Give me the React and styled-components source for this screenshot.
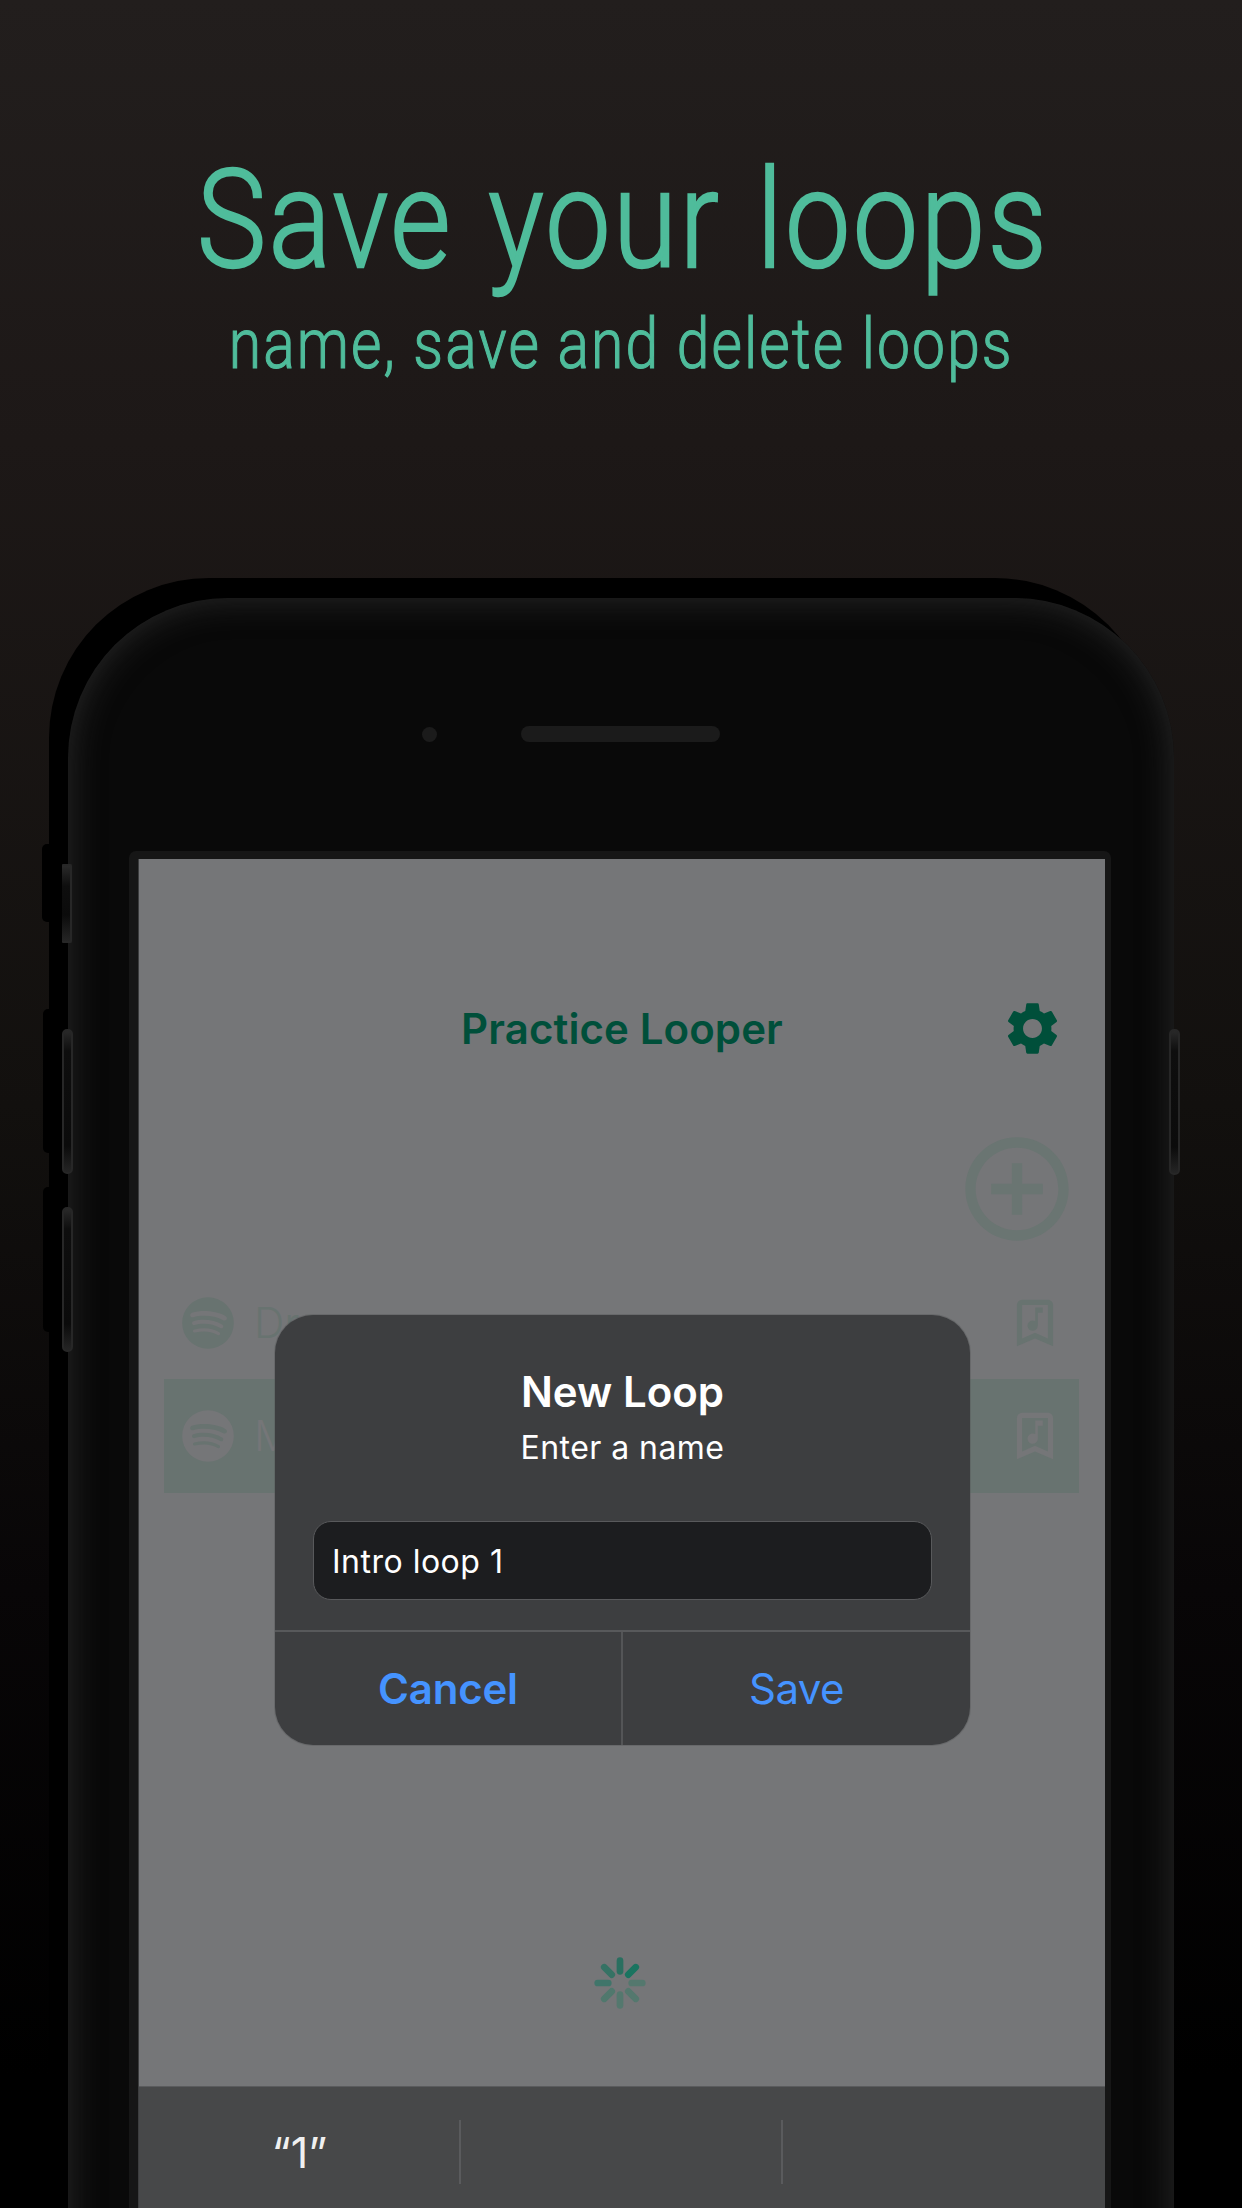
import React from "react";
import styled, { createGlobalStyle } from "styled-components";
import { MdSettings, MdControlPoint } from "react-icons/md";

const GlobalStyle = createGlobalStyle`
  * { box-sizing: border-box; }
  html, body { margin: 0; background: #000; }
  body { font-family: Inter, "Liberation Sans", sans-serif; }
`;

const Page = styled.main`
  width: 1242px;
  height: 2208px;
  overflow: hidden;
  display: flex;
  flex-direction: column;
  background: linear-gradient(#221e1d 0%, #1d1817 20%, #12100e 50%, #080607 72%, #000 94%);
`;

const Heading = styled.header`
  height: 598px;
  flex: none;
  display: flex;
  flex-direction: column;
  align-items: center;
  color: #4fbc9b;
  font-family: Roboto, "Liberation Sans", sans-serif;
`;

const Title = styled.h1`
  margin: 145px 0 0;
  padding-left: 4px;
  font-weight: 300;
  font-size: 138px;
  line-height: 150px;
  letter-spacing: 2.9px;
  word-spacing: 5px;
  white-space: nowrap;
  -webkit-text-stroke: 2.4px currentColor;
  transform: scaleX(0.845);
`;

const Subtitle = styled.p`
  margin: 9px 0 0;
  font-weight: 300;
  font-size: 70px;
  line-height: 80px;
  letter-spacing: 2.5px;
  white-space: nowrap;
  -webkit-text-stroke: 1.2px currentColor;
  transform: scaleX(0.84);
`;

const Device = styled.section`
  position: relative;
  width: 1106px;
  height: 1610px;
  flex: none;
  margin-left: 68px;
`;

const Shade = styled.div`
  position: absolute;
  left: -19px;
  top: -20px;
  width: 1106px;
  height: 1640px;
  border-radius: 160px 160px 0 0;
  background: #000;
`;

const SideShade = styled.div`
  position: absolute;
  left: ${(p) => p.$x}px;
  top: ${(p) => p.$y}px;
  width: 12px;
  height: ${(p) => p.$h}px;
  border-radius: 5px 0 0 5px;
  background: #000;
`;

const SideButton = styled.div`
  position: absolute;
  left: ${(p) => p.$x}px;
  top: ${(p) => p.$y}px;
  width: ${(p) => p.$w}px;
  height: ${(p) => p.$h}px;
  border: 2px solid #272727;
  border-left-width: ${(p) => (p.$flat ? 0 : 2)}px;
  border-radius: ${(p) => (p.$flat ? "1px 2px 2px 1px" : "5px")};
  background: linear-gradient(#292929 0, #0e0e0e 20px, #0b0b0b calc(100% - 26px), #252525 100%);
`;

const Body = styled.div`
  position: relative;
  height: 1690px;
  padding: 128px 63px 0 61px;
  border-radius: 160px 160px 0 0;
  background: #090909;
  box-shadow: inset 0 0 34px #2a2a2a;
`;

const Sensors = styled.div`
  display: flex;
  align-items: center;
  height: 16px;
  margin-left: 293px;
  gap: 84px;
`;

const Camera = styled.i`
  width: 15px;
  height: 15px;
  border-radius: 50%;
  background: #1b1b1b;
`;

const Speaker = styled.i`
  width: 199px;
  height: 16px;
  border-radius: 8px;
  background: #1b1b1b;
`;

const Bezel = styled.div`
  margin-top: 109px;
  padding: 8px 6px 0 9px;
  border-radius: 7px 7px 0 0;
  background: #161616;
`;

const Screen = styled.div`
  position: relative;
  height: 1349px;
  display: flex;
  flex-direction: column;
  border-left: 1px solid #3c3d3e;
  background: #757678;
`;

const NavBar = styled.nav`
  display: grid;
  grid-template-columns: 1fr auto 1fr;
  align-items: center;
  height: 100px;
  margin-top: 119px;
  padding: 0 41px;
  color: #004f3a;

  svg { justify-self: end; }
`;

const NavTitle = styled.h2`
  grid-column: 2;
  margin: 1px 0 0;
  font-size: 42px;
  line-height: 50px;
  font-weight: 600;
  letter-spacing: 0.1px;
`;

const AddRow = styled.div`
  display: flex;
  justify-content: flex-end;
  height: 188px;
  padding: 49px 26px 0 0;
  color: #6a7572;
`;

const TrackList = styled.ul`
  list-style: none;
  margin: 0 26px 0 25px;
  padding: 0;
`;

const Track = styled.li`
  display: flex;
  align-items: center;
  height: ${(p) => (p.$active ? 114 : 113)}px;
  padding: 0 13px;
  color: ${(p) => (p.$active ? "#757678" : "#687370")};
  background: ${(p) => (p.$active ? "#687370" : "transparent")};
`;

const TrackName = styled.span`
  flex: 1;
  margin-left: 15px;
  font-size: 42px;
  line-height: 50px;
  font-weight: 300;
`;

const Spinner = styled.svg`
  display: block;
  align-self: center;
  margin-top: 460px;
  margin-right: 4px;
`;

const Suggestions = styled.div`
  display: grid;
  grid-template-columns: repeat(3, 1fr);
  height: 122px;
  margin-top: auto;
  padding-top: 33px;
  border-top: 1px solid #5a5b5d;
  background: #474849;
`;

const Suggestion = styled.div`
  height: 64px;
  border-right: ${(p) => (p.$last ? 0 : 2)}px solid #5a5b5d;
  padding-left: 1px;
  text-align: center;
  font-size: 43px;
  line-height: 64px;
  font-weight: 400;
  color: #f0f0f0;
`;

const Dialog = styled.div`
  position: absolute;
  left: 136px;
  top: 455.5px;
  width: 695px;
  height: 430px;
  display: flex;
  flex-direction: column;
  border-radius: 38px;
  background: #3d3e40;
  box-shadow: 0 0 0 1px rgba(85, 87, 88, 0.4);
  color: #fff;
`;

const DialogTitle = styled.h3`
  margin: 52.5px 0 0;
  text-align: center;
  font-size: 42px;
  line-height: 50px;
  font-weight: 600;
`;

const DialogText = styled.p`
  margin: 11px 0 0;
  text-align: center;
  font-size: 32px;
  line-height: 40px;
  letter-spacing: 0.45px;
`;

const Field = styled.div`
  height: 79px;
  margin: 53px 38px 0;
  padding-left: 18px;
  border: 1.5px solid #58595b;
  border-radius: 18px;
  background: #1c1d1f;
  font-size: 32px;
  line-height: 79px;
  letter-spacing: 0.5px;
`;

const Actions = styled.div`
  flex: 1;
  display: grid;
  grid-template-columns: 346px 1fr;
  margin-top: 30px;
  border-top: 2px solid #58595b;
`;

const Action = styled.button`
  border: 0;
  border-left: ${(p) => (p.$primary ? 0 : 2)}px solid #545557;
  padding: 2px 0 0;
  background: none;
  color: #4593ff;
  font: ${(p) => (p.$primary ? 600 : 400)} 42px/50px Inter, "Liberation Sans", sans-serif;
  letter-spacing: ${(p) => (p.$primary ? -0.2 : -0.6)}px;
`;

const SpotifyIcon = () => (
  <svg width="62" height="62" viewBox="0 0 24 24" fill="currentColor">
    <path d="M17.9,10.9C14.7,9 9.35,8.8 6.3,9.75C5.8,9.9 5.3,9.6 5.15,9.15C5,8.65 5.3,8.15 5.75,8C9.3,6.95 15.15,7.15 18.85,9.35C19.3,9.6 19.45,10.2 19.2,10.65C18.95,11 18.35,11.15 17.9,10.9M17.8,13.7C17.55,14.05 17.1,14.2 16.75,13.95C14.05,12.3 9.95,11.8 6.8,12.8C6.4,12.9 5.95,12.7 5.85,12.3C5.75,11.9 5.95,11.45 6.35,11.35C10,10.25 14.5,10.8 17.6,12.7C17.9,12.85 18.05,13.35 17.8,13.7M16.6,16.45C16.4,16.75 16.05,16.85 15.75,16.65C13.4,15.2 10.45,14.9 6.95,15.7C6.6,15.8 6.3,15.55 6.2,15.25C6.1,14.9 6.35,14.6 6.65,14.5C10.45,13.65 13.75,14 16.35,15.6C16.7,15.75 16.75,16.15 16.6,16.45M12,2A10,10 0 0,0 2,12A10,10 0 0,0 12,22A10,10 0 0,0 22,12A10,10 0 0,0 12,2Z" />
  </svg>
);

const BookmarkMusicIcon = () => (
  <svg width="62" height="62" viewBox="0 0 24 24" fill="currentColor">
    <path d="M17,18L12,15.82L7,18V5H17M17,3H7A2,2 0 0,0 5,5V21L12,18L19,21V5C19,3.89 18.1,3 17,3Z" />
    <path d="M15,6V8H13.1V13A2,2 0 1,1 12.1,11.27V6Z" />
  </svg>
);

const SPOKES = ["#2a6f60", "#1a7460", "#54786e", "#54786e", "#54786e", "#50786d", "#40756a", "#357264"];

const ActivityIndicator = () => (
  <Spinner width="60" height="60" viewBox="-30 -30 60 60">
    {SPOKES.map((color, i) => (
      <line
        key={i}
        y1="-22.3"
        y2="-11.7"
        stroke={color}
        strokeWidth="6.7"
        strokeLinecap="round"
        transform={`rotate(${i * 45})`}
      />
    ))}
  </Spinner>
);

const TRACKS = [
  { name: "Dreams", active: false },
  { name: "M", active: true },
];

export default function App() {
  return (
    <Page>
      <GlobalStyle />
      <Heading>
        <Title>Save your loops</Title>
        <Subtitle>name, save and delete loops</Subtitle>
      </Heading>
      <Device>
        <Shade />
        <SideShade $x={-26} $y={246} $h={78} />
        <SideShade $x={-25} $y={411} $h={144} />
        <SideShade $x={-25} $y={589} $h={145} />
        <Body>
          <Sensors>
            <Camera />
            <Speaker />
          </Sensors>
          <Bezel>
            <Screen>
              <NavBar>
                <NavTitle>Practice Looper</NavTitle>
                <MdSettings size={63} />
              </NavBar>
              <AddRow>
                <MdControlPoint size={124} />
              </AddRow>
              <TrackList>
                {TRACKS.map((t) => (
                  <Track key={t.name} $active={t.active}>
                    <SpotifyIcon />
                    <TrackName>{t.name}</TrackName>
                    <BookmarkMusicIcon />
                  </Track>
                ))}
              </TrackList>
              <ActivityIndicator />
              <Suggestions>
                <Suggestion>“1”</Suggestion>
                <Suggestion />
                <Suggestion $last />
              </Suggestions>
              <Dialog>
                <DialogTitle>New Loop</DialogTitle>
                <DialogText>Enter a name</DialogText>
                <Field>Intro loop 1</Field>
                <Actions>
                  <Action $primary>Cancel</Action>
                  <Action>Save</Action>
                </Actions>
              </Dialog>
            </Screen>
          </Bezel>
        </Body>
        <SideButton $x={-6} $y={266} $w={10} $h={79} $flat />
        <SideButton $x={-6} $y={431} $w={11} $h={145} />
        <SideButton $x={-6} $y={609} $w={11} $h={145} />
        <SideButton $x={1101} $y={431} $w={11} $h={146} />
      </Device>
    </Page>
  );
}
